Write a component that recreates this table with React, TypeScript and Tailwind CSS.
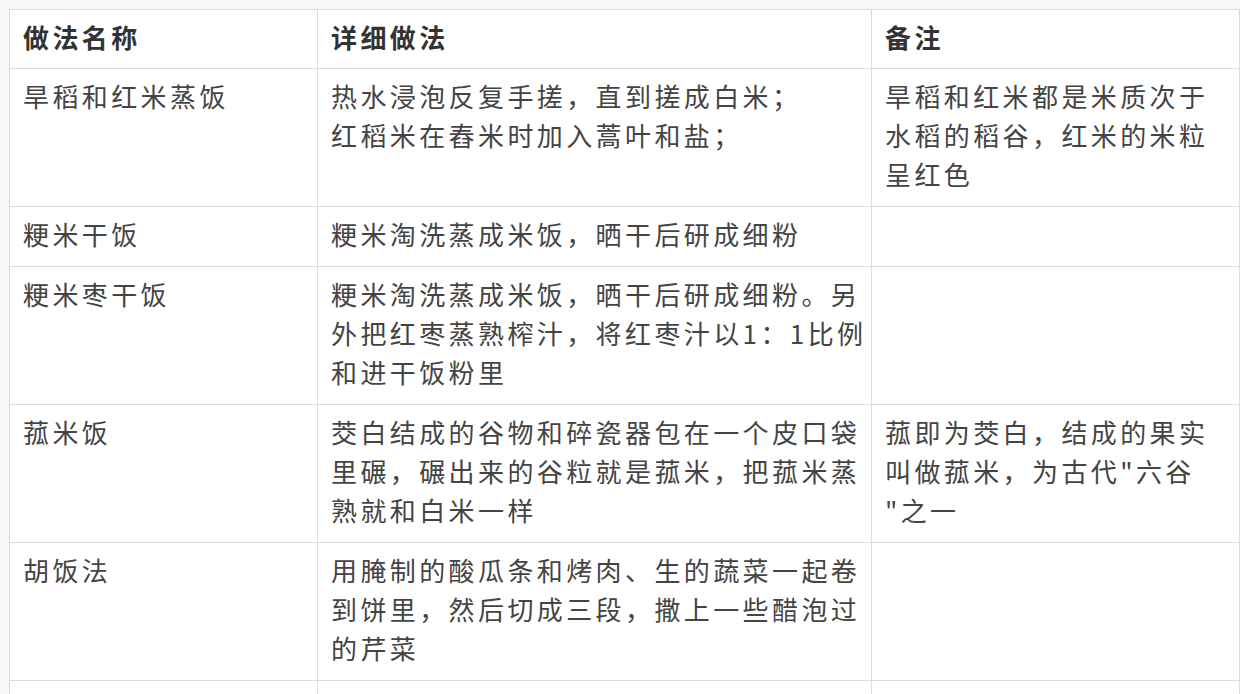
const ROWS: { name: string; method: string[]; note: string[] }[] = [
  {
    name: '旱稻和红米蒸饭',
    method: ['热水浸泡反复手搓，直到搓成白米；', '红稻米在舂米时加入蒿叶和盐；'],
    note: ['旱稻和红米都是米质次于', '水稻的稻谷，红米的米粒', '呈红色'],
  },
  { name: '粳米干饭', method: ['粳米淘洗蒸成米饭，晒干后研成细粉'], note: [] },
  {
    name: '粳米枣干饭',
    method: ['粳米淘洗蒸成米饭，晒干后研成细粉。另', '外把红枣蒸熟榨汁，将红枣汁以1：1比例', '和进干饭粉里'],
    note: [],
  },
  {
    name: '菰米饭',
    method: ['茭白结成的谷物和碎瓷器包在一个皮口袋', '里碾，碾出来的谷粒就是菰米，把菰米蒸', '熟就和白米一样'],
    note: ['菰即为茭白，结成的果实', '叫做菰米，为古代"六谷', '"之一'],
  },
  {
    name: '胡饭法',
    method: ['用腌制的酸瓜条和烤肉、生的蔬菜一起卷', '到饼里，然后切成三段，撒上一些醋泡过', '的芹菜'],
    note: [],
  },
  { name: '', method: [''], note: [] },
]

function Lines({ lines }: { lines: string[] }) {
  return (
    <>
      {lines.map((l, i) => (
        <div key={i} className="whitespace-nowrap">{l || '\u00a0'}</div>
      ))}
    </>
  )
}

export default function App() {
  return (
    <div className="h-[694px] w-[1250px] overflow-hidden bg-white">
      <div className="w-[1240px] bg-[#f7f7f7] pl-[9px] pt-[9px]" style={{ fontFamily: '"Noto Sans CJK SC", "Noto Sans", sans-serif' }}>
        <table className="w-[1230px] table-fixed border-collapse bg-white text-[26px] leading-[39px] tracking-[3.4px] text-[#444]">
          <colgroup>
            <col className="w-[308px]" />
            <col className="w-[554px]" />
            <col className="w-[368px]" />
          </colgroup>
          <thead>
            <tr className="text-left text-[#333]">
              <th className="border border-[#dcdcdc] px-[13px] pb-[12px] pt-[7px] align-top font-bold">做法名称</th>
              <th className="border border-[#dcdcdc] px-[13px] pb-[12px] pt-[7px] align-top font-bold">详细做法</th>
              <th className="border border-[#dcdcdc] px-[13px] pb-[12px] pt-[7px] align-top font-bold">备注</th>
            </tr>
          </thead>
          <tbody>
            {ROWS.map((r, i) => (
              <tr key={i}>
                <td className="border border-[#dcdcdc] px-[13px] pb-[13px] pt-[7px] align-top"><Lines lines={[r.name]} /></td>
                <td className="border border-[#dcdcdc] px-[13px] pb-[13px] pt-[7px] align-top"><Lines lines={r.method} /></td>
                <td className="border border-[#dcdcdc] px-[13px] pb-[13px] pt-[7px] align-top"><Lines lines={r.note} /></td>
              </tr>
            ))}
          </tbody>
        </table>
      </div>
    </div>
  )
}
